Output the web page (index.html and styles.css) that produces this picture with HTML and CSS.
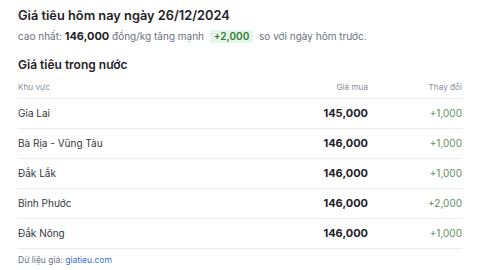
FILE: index.html
```html
<!DOCTYPE html>
<html lang="vi">
<head>
<meta charset="utf-8">
<link rel="stylesheet" href="styles.css">
</head>
<body>
<div class="page">
  <h1 class="title">Giá tiêu hôm nay ngày 26/12/2024</h1>
  <p class="summary">cao nhất: <strong class="max">146,000</strong> đồng/kg tăng mạnh <span class="badge">+2,000</span> so với ngày hôm trước.</p>
  <h2 class="section">Giá tiêu trong nước</h2>
  <table class="prices">
    <thead>
      <tr><th class="c-region">Khu vực</th><th class="c-price">Giá mua</th><th class="c-change">Thay đổi</th></tr>
    </thead>
    <tbody>
      <tr><td class="c-region">Gia Lai</td><td class="c-price">145,000</td><td class="c-change">+1,000</td></tr>
      <tr><td class="c-region">Bà Rịa - Vũng Tàu</td><td class="c-price">146,000</td><td class="c-change">+1,000</td></tr>
      <tr><td class="c-region">Đắk Lắk</td><td class="c-price">146,000</td><td class="c-change">+1,000</td></tr>
      <tr><td class="c-region">Bình Phước</td><td class="c-price">146,000</td><td class="c-change">+2,000</td></tr>
      <tr><td class="c-region">Đắk Nông</td><td class="c-price">146,000</td><td class="c-change">+1,000</td></tr>
    </tbody>
  </table>
  <p class="source">Dữ liệu giá: <a class="link" href="#">giatieu.com</a></p>
</div>
</body>
</html>
```
FILE: styles.css
```css
* { box-sizing: border-box; }
html, body { margin: 0; padding: 0; background: #fff; }
body {
  font-family: Inter, "Noto Sans", "DejaVu Sans", sans-serif;
  color: #1f2328;
}
.page { padding: 8px 18px 0 18px; }
.title {
  margin: 0;
  font-size: 12.8px;
  line-height: 16px;
  font-weight: 600;
  color: #1f2328;
}
.summary {
  margin: 4px 0 0 0;
  font-size: 10px;
  line-height: 16px;
  color: #6b7280;
}
.max {
  font-size: 11px;
  font-weight: 700;
  color: #1f2328;
}
.badge {
  display: inline-block;
  background: #e7f5e8;
  color: #2e7d32;
  font-weight: 600;
  font-size: 10px;
  line-height: 13px;
  padding: 0 4px;
  margin: 0 3px;
  border-radius: 2px;
}
.section {
  margin: 13px 0 0 0;
  font-size: 12px;
  line-height: 15px;
  font-weight: 600;
  color: #1f2328;
}
.prices {
  width: 100%;
  border-collapse: collapse;
  margin-top: 5px;
}
.prices th {
  font-size: 8.2px;
  font-weight: 400;
  color: #8a8f98;
  height: 21px;
  padding: 0;
  border-bottom: 1px solid #eceef1;
  vertical-align: middle;
}
.prices td {
  font-size: 10px;
  height: 30px;
  padding: 0;
  border-bottom: 1px solid #eceef1;
  vertical-align: middle;
  color: #33383e;
}
.c-region { text-align: left; }
.c-price { text-align: right; width: 150px; }
.c-change { text-align: right; width: 94px; }
.prices td.c-price { font-size: 11px; font-weight: 700; color: #1f2328; }
.prices td.c-change { color: #5f8f64; }
.source {
  margin: 6px 0 0 0;
  font-size: 8.5px;
  color: #6b7280;
}
.link { color: #3b6fd6; text-decoration: none; }
```
